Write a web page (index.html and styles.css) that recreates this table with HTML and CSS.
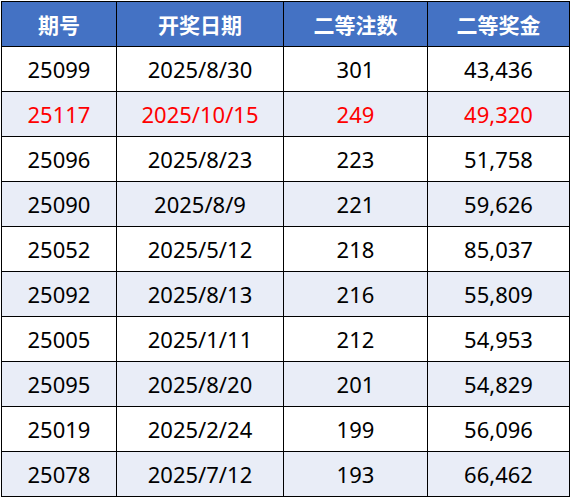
FILE: index.html
```html
<!DOCTYPE html>
<html lang="zh">
<head>
<meta charset="utf-8">
<link rel="stylesheet" href="styles.css">
</head>
<body>
<table class="grid">
  <colgroup>
    <col class="c1"><col class="c2"><col class="c3"><col class="c4">
  </colgroup>
  <thead>
    <tr><th>期号</th><th>开奖日期</th><th>二等注数</th><th>二等奖金</th></tr>
  </thead>
  <tbody>
    <tr><td>25099</td><td>2025/8/30</td><td>301</td><td>43,436</td></tr>
    <tr class="alt red"><td>25117</td><td>2025/10/15</td><td>249</td><td>49,320</td></tr>
    <tr><td>25096</td><td>2025/8/23</td><td>223</td><td>51,758</td></tr>
    <tr class="alt"><td>25090</td><td>2025/8/9</td><td>221</td><td>59,626</td></tr>
    <tr><td>25052</td><td>2025/5/12</td><td>218</td><td>85,037</td></tr>
    <tr class="alt"><td>25092</td><td>2025/8/13</td><td>216</td><td>55,809</td></tr>
    <tr><td>25005</td><td>2025/1/11</td><td>212</td><td>54,953</td></tr>
    <tr class="alt"><td>25095</td><td>2025/8/20</td><td>201</td><td>54,829</td></tr>
    <tr><td>25019</td><td>2025/2/24</td><td>199</td><td>56,096</td></tr>
    <tr class="alt"><td>25078</td><td>2025/7/12</td><td>193</td><td>66,462</td></tr>
  </tbody>
</table>
</body>
</html>
```
FILE: styles.css
```css
html, body {
  margin: 0;
  padding: 0;
  background: #fff;
}
.grid {
  border-collapse: collapse;
  margin: 1px 0 0 1px;
  table-layout: fixed;
  width: 568px;
  font-family: "Noto Sans", "Noto Sans CJK SC", sans-serif;
  font-size: 22px;
  color: #000;
}
.c1 { width: 115px; }
.c2 { width: 167px; }
.c3 { width: 144px; }
.c4 { width: 142px; }
.grid th, .grid td {
  border: 1px solid #000;
  height: 44px;
  padding: 0;
  text-align: center;
  vertical-align: middle;
  line-height: 1;
}
.grid th {
  background: #4472C4;
  color: #fff;
  font-family: "Noto Sans CJK SC", sans-serif;
  font-weight: bold;
  font-size: 21px;
}
.grid tr.alt td {
  background: #E9EDF7;
}
.grid tr.red td {
  color: #FF0000;
}
```
